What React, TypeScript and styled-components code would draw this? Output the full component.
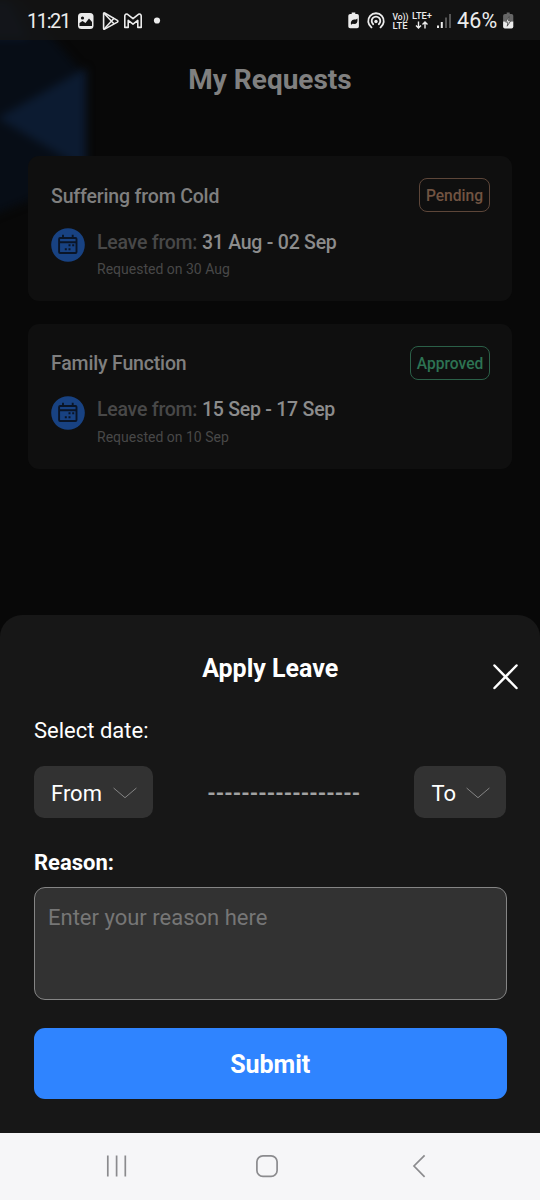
import React from "react";
import styled, { createGlobalStyle } from "styled-components";

const GlobalStyle = createGlobalStyle`
  * { box-sizing: border-box; }
  body { margin: 0; background: #080808; font-family: Roboto, "Liberation Sans", sans-serif; }
  button, textarea { font-family: inherit; }
`;

const Screen = styled.div`
  position: relative;
  display: flex;
  flex-direction: column;
  width: 540px;
  height: 1200px;
  overflow: hidden;
  background: #080808;
`;

const Backdrop = styled.svg`
  position: absolute;
  top: 0;
  left: 0;
  pointer-events: none;
`;

const StatusBar = styled.header`
  position: relative;
  display: flex;
  justify-content: space-between;
  align-items: center;
  height: 40px;
  padding: 1px 25px 0 27px;
  background: rgba(21, 21, 21, 0.8);
  color: #ececec;
`;

const StatusGroup = styled.div`
  display: flex;
  align-items: center;
  height: 40px;
`;

const StatusText = styled.span<{ $width: number; $size: number; $spacing: number }>`
  width: ${(p) => p.$width}px;
  font-size: ${(p) => p.$size}px;
  line-height: 40px;
  letter-spacing: ${(p) => p.$spacing}px;
  white-space: nowrap;
`;

const StatusIcons = styled.svg`
  display: block;
  flex: none;
`;

const Requests = styled.main`
  position: relative;
  display: flex;
  flex-direction: column;
  align-items: center;
  height: 574.5px;
  padding: 0 28px;
`;

const PageTitle = styled.h1`
  margin: 0;
  padding-top: 23px;
  height: 116px;
  font-size: 28px;
  font-weight: 700;
  line-height: 34px;
  color: #808080;
`;

const RequestCard = styled.article`
  display: flex;
  flex-direction: column;
  width: 100%;
  height: 145px;
  margin-bottom: 22.5px;
  padding: 22px 22px 0 23px;
  border-radius: 11px;
  background: #0f0f0f;
`;

const CardHeader = styled.div`
  display: flex;
  justify-content: space-between;
  align-items: center;
  height: 34px;
`;

const CardTitle = styled.h2`
  margin: 0;
  padding-top: 3px;
  font-size: 19.5px;
  font-weight: 500;
  line-height: 24px;
  letter-spacing: -0.17px;
  color: #7f7f7f;
`;

const StatusBadge = styled.span<{ $color: string; $border: string; $width: number }>`
  display: flex;
  justify-content: center;
  align-items: center;
  width: ${(p) => p.$width}px;
  height: 34px;
  padding-top: 2px;
  border: 1px solid ${(p) => p.$border};
  border-radius: 8px;
  font-size: 15.6px;
  font-weight: 500;
  color: ${(p) => p.$color};
`;

const CardBody = styled.div`
  display: flex;
  gap: 12px;
  padding-top: 16px;
`;

const CardIcon = styled.svg`
  display: block;
`;

const Period = styled.p`
  margin: 0;
  padding-top: 0.5px;
  font-size: 19.5px;
  font-weight: 500;
  line-height: 28px;
  letter-spacing: -0.24px;
  color: #484848;
  white-space: nowrap;
`;

const PeriodDates = styled.span`
  color: #8c8c8c;
`;

const RequestedOn = styled.p`
  margin: 0;
  padding-top: 2.5px;
  font-size: 14px;
  line-height: 20px;
  color: #484848;
`;

const Sheet = styled.section`
  position: relative;
  display: flex;
  flex-direction: column;
  height: 518px;
  padding: 0 33.5px 0 34px;
  border-radius: 22px 22px 0 0;
  background: #171717;
  color: #ffffff;
`;

const SheetTitle = styled.h2`
  margin: 0;
  padding-top: 38.5px;
  height: 101px;
  font-size: 25px;
  font-weight: 700;
  line-height: 32px;
  text-align: center;
`;

const CloseButton = styled.button`
  position: absolute;
  top: 46.5px;
  right: 19px;
  display: flex;
  padding: 0;
  border: 0;
  background: none;
  color: inherit;
`;

const FieldLabel = styled.label<{ $bold?: boolean }>`
  font-size: 22px;
  font-weight: ${(p) => (p.$bold ? 700 : 400)};
  line-height: 30px;
`;

const DateRow = styled.div`
  display: flex;
  justify-content: space-between;
  align-items: center;
  height: 52px;
  margin: 20.5px 0 30px;
`;

const DateButton = styled.button<{ $width: number }>`
  display: flex;
  justify-content: space-between;
  align-items: center;
  width: ${(p) => p.$width}px;
  height: 52px;
  padding: 2px 16px 0 17px;
  border: 0;
  border-radius: 10px;
  background: #323232;
  color: #ffffff;
  font-size: 22px;
`;

const Dashes = styled.span`
  padding-top: 3px;
  color: #a2a2a2;
  font-size: 21.6px;
  font-weight: 700;
  white-space: nowrap;
`;

const ReasonInput = styled.textarea`
  display: block;
  width: 100%;
  height: 112.5px;
  margin: 9px 0 28px;
  padding: 15px 13px;
  border: 1px solid #858585;
  border-radius: 11px;
  outline: 0;
  resize: none;
  background: #323232;
  color: #ffffff;
  font-size: 22px;
  line-height: 30px;
  &::placeholder { color: #767676; opacity: 1; }
`;

const SubmitButton = styled.button`
  height: 71.5px;
  padding: 2px 0 0;
  border: 0;
  border-radius: 11px;
  background: #2f84ff;
  color: #ffffff;
  font-size: 25px;
  font-weight: 700;
`;

const NavBar = styled.nav`
  display: flex;
  align-items: center;
  justify-content: space-between;
  height: 67.5px;
  padding: 0 114px 0 106px;
  background: #f6f6f8;
`;

const HomeIcon = styled.svg`
  margin-right: 5px;
`;

const CalendarIcon = () => (
  <CardIcon width="34" height="34" viewBox="0 0 34 34" fill="none">
    <circle cx="17" cy="17" r="16.8" fill="#184282" />
    <g stroke="#0a1527" strokeWidth="1.9">
      <rect x="8.1" y="10" width="17.4" height="15" rx="1" />
      <path d="M8 14.2h18M12 6.8v4M21.7 6.8v4" />
    </g>
    <path
      d="M17.5 16.3h2v2h-2zM21.2 16.3h2v2h-2zM13.8 20.2h2v2h-2zM17.5 20.2h2v2h-2z"
      fill="#0a1527"
    />
  </CardIcon>
);

const Chevron = () => (
  <svg width="24" height="12" viewBox="0 0 24 12" fill="none" stroke="#858585" strokeWidth="1">
    <path d="M.6 1 12 10.7 23.4 1" />
  </svg>
);

const requests = [
  {
    title: "Suffering from Cold",
    dates: "31 Aug - 02 Sep",
    requested: "30 Aug",
    status: "Pending",
    color: "#715442",
    border: "#5d4639",
    width: 71,
  },
  {
    title: "Family Function",
    dates: "15 Sep - 17 Sep",
    requested: "10 Sep",
    status: "Approved",
    color: "#2d7353",
    border: "#2b6048",
    width: 80,
  },
];

export default function App() {
  return (
    <Screen>
      <GlobalStyle />
      <Backdrop width="160" height="250" viewBox="0 0 160 250">
        <defs>
          <filter id="soft" x="-40%" y="-40%" width="180%" height="180%" colorInterpolationFilters="sRGB">
            <feGaussianBlur stdDeviation="4" />
          </filter>
        </defs>
        <g filter="url(#soft)">
          <path d="M-20 0H20L82 72V166L30 200 -20 220Z" fill="#070d16" />
          <path d="M-2 118 86 68V170Z" fill="#0c1b31" />
          <path d="M-20 0H8L28 38H-20Z" fill="#0a1830" />
        </g>
      </Backdrop>

      <StatusBar>
        <StatusGroup>
          <StatusText $width={50} $size={20} $spacing={-1.4}>11:21</StatusText>
          <StatusIcons width="86" height="40" viewBox="77 0 86 40" fill="none">
            <rect x="78" y="12" width="15.5" height="16" rx="3.5" fill="#ececec" />
            <circle cx="82.5" cy="17" r="1.6" fill="#151515" />
            <path d="M79.5 25v-3l3-2 3 2 3.5-4.5 3 3.5v4Z" fill="#151515" />
            <g stroke="#ececec" strokeWidth="1.6" strokeLinejoin="round" transform="translate(0 -.8)">
              <path d="M103.6 13.2v15.2q0 1 1 .5l12.8-7q1-.9 0-1.7l-12.8-7.4q-1-.4-1 .4Z" />
              <path d="m104 13 10.2 10.8M104 29l10.2-11.2" />
              <path d="M124.8 15.5v11.7h3.4v-7l4.8 3.7 4.8-3.7v7h3.4V15.5q-.6-2.3-2.8-1.4L133 18.5l-5.4-4.4q-2.2-.9-2.8 1.4Z" />
            </g>
            <circle cx="157" cy="19.5" r="3.1" fill="#ececec" />
          </StatusIcons>
        </StatusGroup>
        <StatusGroup>
          <StatusIcons
            width="110"
            height="40"
            viewBox="347 0 110 40"
            fill="none"
            fontFamily="Roboto, sans-serif"
            fontWeight="500"
          >
            <path d="M350.2 13h1.5v-1.6h3.6V13h1.8q1.8 0 1.8 1.7v10.8q0 1.7-1.8 1.7h-7q-1.8 0-1.8-1.7V14.700q0-1.700 1.900-1.700Z" fill="#ececec" />
            <path d="M351 23.800q-1-4.500 3.200-5.200 2 0 3.200-1.200.8 6.500-4.700 5.400Z" fill="#151515" />
            <g stroke="#ececec" strokeWidth="1.8" strokeLinecap="round">
              <path d="M371.500 26.400a7.800 7.800 0 1 1 9 0M373.200 23.200a4.300 4.300 0 1 1 5.600 0" />
            </g>
            <circle cx="376" cy="20.500" r="1.700" fill="#ececec" />
            <g fill="#ececec">
              <text x="392.4" y="18.700" fontSize="9.5" textLength="16" lengthAdjust="spacingAndGlyphs">Vo))</text>
              <text x="392.6" y="27.500" fontSize="9" textLength="15" lengthAdjust="spacingAndGlyphs">LTE</text>
              <text x="412" y="18" fontSize="9.5" textLength="20" lengthAdjust="spacingAndGlyphs">LTE+</text>
            </g>
            <path d="M418.500 20.500v6.500m-2.500-2.500 2.500 2.500 2.500-2.500M425 27.500v-6.500m-2.500 2.500 2.500-2.500 2.500 2.500" stroke="#ececec" strokeWidth="1.400" />
            <path d="M437 24.500h2v2.500h-2zM440.800 21h2v6h-2z" fill="#ececec" />
            <path d="M445 16.500h2v10.500h-2zM449 13h2v14h-2z" fill="#555" />
          </StatusIcons>
          <StatusText $width={45} $size={21.5} $spacing={0.2}>46%</StatusText>
          <StatusIcons width="13" height="40" viewBox="502 0 13 40">
            <path d="M505 13h1.700v-1.600h3V13h1.800q1.800 0 1.800 1.700v6h-10.200v-6Q503.100 13 505 13Z" fill="#666" />
            <path d="M503.100 20.500h10.200v5.300q0 1.700-1.800 1.700h-6.600q-1.800 0-1.800-1.700Z" fill="#ececec" />
            <path d="m509 15.500-3.300 5.600h2.200l-.7 4.100 3.500-5.400h-2.200Z" fill="#ececec" stroke="#444" strokeWidth=".8" />
          </StatusIcons>
        </StatusGroup>
      </StatusBar>

      <Requests>
        <PageTitle>My Requests</PageTitle>
        {requests.map((r) => (
          <RequestCard key={r.title}>
            <CardHeader>
              <CardTitle>{r.title}</CardTitle>
              <StatusBadge $color={r.color} $border={r.border} $width={r.width}>
                {r.status}
              </StatusBadge>
            </CardHeader>
            <CardBody>
              <CalendarIcon />
              <div>
                <Period>
                  Leave from: <PeriodDates>{r.dates}</PeriodDates>
                </Period>
                <RequestedOn>Requested on {r.requested}</RequestedOn>
              </div>
            </CardBody>
          </RequestCard>
        ))}
      </Requests>

      <Sheet>
        <SheetTitle>Apply Leave</SheetTitle>
        <CloseButton aria-label="Close">
          <svg width="31" height="31" viewBox="0 0 31 31" fill="none" stroke="#fff" strokeWidth="2.5" strokeLinecap="round">
            <path d="m4.5 4.5 22 22.5M26.5 4.5 4.5 27" />
          </svg>
        </CloseButton>
        <FieldLabel>Select date:</FieldLabel>
        <DateRow>
          <DateButton $width={119}>
            From
            <Chevron />
          </DateButton>
          <Dashes>------------------</Dashes>
          <DateButton $width={92}>
            To
            <Chevron />
          </DateButton>
        </DateRow>
        <FieldLabel $bold htmlFor="reason">Reason:</FieldLabel>
        <ReasonInput id="reason" placeholder="Enter your reason here" />
        <SubmitButton>Submit</SubmitButton>
      </Sheet>

      <NavBar>
        <svg width="21" height="24" viewBox="0 0 21 24" stroke="#8b8b8e" strokeWidth="1.7">
          <path d="M1.8 1.5v21M10.6 1.5v21M19.3 1.5v21" />
        </svg>
        <HomeIcon width="24" height="24" viewBox="0 0 24 24" fill="none" stroke="#8b8b8e" strokeWidth="1.7">
          <rect x="1.9" y="1.8" width="20.2" height="20.6" rx="6" />
        </HomeIcon>
        <svg width="14" height="24" viewBox="0 0 14 24" fill="none" stroke="#8b8b8e" strokeWidth="1.7">
          <path d="M12.6 1.3 2 12l10.6 10.8" />
        </svg>
      </NavBar>
    </Screen>
  );
}
